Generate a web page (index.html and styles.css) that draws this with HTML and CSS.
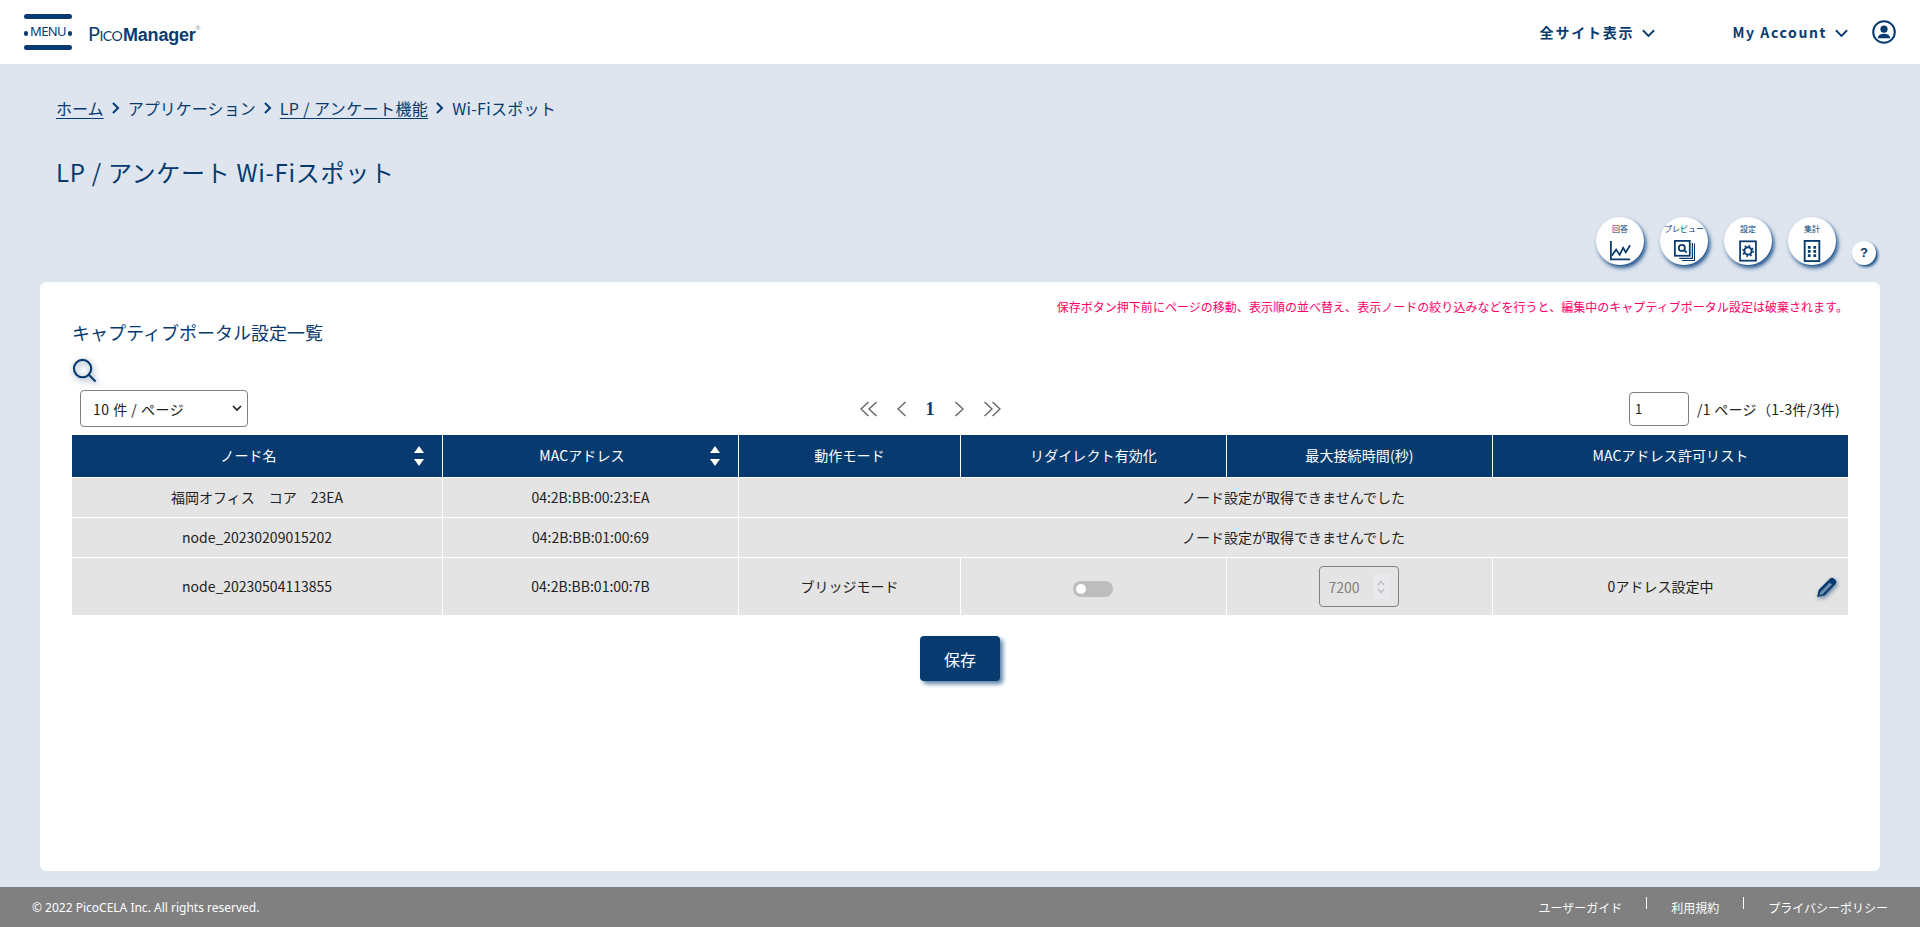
FILE: index.html
```html
<!DOCTYPE html>
<html lang="ja">
<head>
<meta charset="utf-8">
<title>LP / アンケート Wi-Fiスポット</title>
<link rel="stylesheet" href="styles.css">
</head>
<body>
<header class="topbar">
  <div class="brand">
    <div class="menu-btn">
      <span class="menu-bar"></span>
      <span class="menu-mid"><i class="menu-dot"></i><span class="menu-text">MENU</span><i class="menu-dot"></i></span>
      <span class="menu-bar"></span>
    </div>
    <div class="logo"><span class="logo-p">P</span><span class="logo-ico">ICO</span><span class="logo-m">Manager</span><sup class="logo-r">®</sup></div>
  </div>
  <nav class="topnav">
    <a class="nav-site">全サイト表示<svg class="chev" width="13" height="9" viewBox="0 0 14 9"><path d="M1 1l6 6 6-6" fill="none" stroke="#073b6f" stroke-width="2"/></svg></a>
    <a class="nav-account">My Account<svg class="chev" width="13" height="9" viewBox="0 0 14 9"><path d="M1 1l6 6 6-6" fill="none" stroke="#073b6f" stroke-width="2"/></svg></a>
    <svg class="user-ic" width="24" height="24" viewBox="0 0 24 24"><circle cx="12" cy="12" r="10.8" fill="none" stroke="#073b6f" stroke-width="2"/><circle cx="12" cy="9.2" r="3.6" fill="#073b6f"/><path d="M5.6 18.2c.6-3 3-4.4 6.4-4.4s5.800 1.400 6.400 4.400z" fill="#073b6f"/></svg>
  </nav>
</header>

<main class="page">
  <div class="crumbs">
    <a class="crumb-link">ホーム</a><svg class="crumb-sep" width="10" height="12" viewBox="0 0 10 12"><path d="M2 1l5 5-5 5" fill="none" stroke="#073b6f" stroke-width="2"/></svg><span>アプリケーション</span><svg class="crumb-sep" width="10" height="12" viewBox="0 0 10 12"><path d="M2 1l5 5-5 5" fill="none" stroke="#073b6f" stroke-width="2"/></svg><a class="crumb-link crumb-wide">LP / アンケート機能</a><svg class="crumb-sep" width="10" height="12" viewBox="0 0 10 12"><path d="M2 1l5 5-5 5" fill="none" stroke="#073b6f" stroke-width="2"/></svg><span class="crumb-last">Wi-Fiスポット</span>
  </div>
  <h1 class="page-title">LP / アンケート Wi-Fiスポット</h1>

  <div class="actions">
    <button class="round-btn"><span class="round-label">回答</span>
      <svg width="21" height="21" viewBox="0 0 24 24"><path d="M1 1v21h22" fill="none" stroke="#073b6f" stroke-width="2"/><path d="M2 18l5-7 4 6 4-8 3 5 5-8" fill="none" stroke="#073b6f" stroke-width="2"/></svg></button>
    <button class="round-btn"><span class="round-label">プレビュー</span>
      <svg width="21" height="21" viewBox="0 0 24 24"><rect x="1" y="1" width="17" height="17" fill="none" stroke="#073b6f" stroke-width="2"/><path d="M21 3.500v17.500H6M23.500 4v19.500H9" fill="none" stroke="#073b6f" stroke-width="1.400"/><circle cx="9" cy="9" r="3.500" fill="none" stroke="#073b6f" stroke-width="2"/><path d="M11.500 11.500l3 3" stroke="#073b6f" stroke-width="2"/></svg></button>
    <button class="round-btn"><span class="round-label">設定</span>
      <svg width="18" height="22" viewBox="0 0 20 25"><rect x="1" y="1.500" width="18" height="22" fill="none" stroke="#073b6f" stroke-width="2"/><circle cx="10" cy="12.500" r="4.200" fill="none" stroke="#073b6f" stroke-width="2.400"/><circle cx="10" cy="12.500" r="6" fill="none" stroke="#073b6f" stroke-width="1.600" stroke-dasharray="2 2.700"/></svg></button>
    <button class="round-btn"><span class="round-label">集計</span>
      <svg width="18" height="22" viewBox="0 0 18 24"><rect x="1" y="1" width="16" height="22" fill="none" stroke="#073b6f" stroke-width="2"/><path d="M4.500 6.500h3v3h-3zM10.500 6.500h3v3h-3zM4.500 11h3v3h-3zM10.500 11h3v3h-3zM4.500 15.500h3v3h-3zM10.500 15.500h3v3h-3z" fill="#073b6f"/></svg></button>
    <button class="help-btn">?</button>
  </div>

  <section class="card">
    <p class="warning">保存ボタン押下前にページの移動、表示順の並べ替え、表示ノードの絞り込みなどを行うと、編集中のキャプティブポータル設定は破棄されます。</p>
    <h2 class="card-title">キャプティブポータル設定一覧</h2>
    <svg class="search-ic" width="25" height="25" viewBox="0 0 26 26"><circle cx="11" cy="11" r="9" fill="none" stroke="#073b6f" stroke-width="2.200"/><path d="M17.500 17.500l7 7" stroke="#073b6f" stroke-width="2.200"/></svg>
    <div class="toolbar">
      <div class="select-box"><span>10 件 / ページ</span><svg width="10" height="7" viewBox="0 0 10 7"><path d="M1 1l4 4 4-4" fill="none" stroke="#222" stroke-width="1.700"/></svg></div>
      <div class="pager">
        <svg width="17" height="16" viewBox="0 0 17 16"><path d="M8.500 1L1 8l7.500 7M16.500 1L9 8l7.500 7" fill="none" stroke="#666" stroke-width="1.400"/></svg>
        <svg width="9" height="16" viewBox="0 0 9 16"><path d="M8.500 1L1 8l7.500 7" fill="none" stroke="#666" stroke-width="1.400"/></svg>
        <span class="pager-num">1</span>
        <svg width="9" height="16" viewBox="0 0 9 16"><path d="M.5 1L8 8l-7.500 7" fill="none" stroke="#666" stroke-width="1.400"/></svg>
        <svg width="17" height="16" viewBox="0 0 17 16"><path d="M.5 1L8 8l-7.500 7M8.500 1L16 8l-7.500 7" fill="none" stroke="#666" stroke-width="1.400"/></svg>
      </div>
      <div class="page-info"><span class="page-input">1</span><span>/1 ページ（1-3件/3件)</span></div>
    </div>

    <table class="grid">
      <colgroup>
        <col class="c1"><col class="c2"><col class="c3"><col class="c4"><col class="c5"><col class="c6">
      </colgroup>
      <thead>
        <tr>
          <th><div class="th-sort"><span>ノード名</span><span class="sorter"><i class="up"></i><i class="down"></i></span></div></th>
          <th><div class="th-sort"><span>MACアドレス</span><span class="sorter"><i class="up"></i><i class="down"></i></span></div></th>
          <th>動作モード</th>
          <th>リダイレクト有効化</th>
          <th>最大接続時間(秒)</th>
          <th>MACアドレス許可リスト</th>
        </tr>
      </thead>
      <tbody>
        <tr class="row-s"><td>福岡オフィス　コア　23EA</td><td>04:2B:BB:00:23:EA</td><td colspan="4">ノード設定が取得できませんでした</td></tr>
        <tr class="row-s"><td>node_20230209015202</td><td>04:2B:BB:01:00:69</td><td colspan="4">ノード設定が取得できませんでした</td></tr>
        <tr class="row-l">
          <td>node_20230504113855</td>
          <td>04:2B:BB:01:00:7B</td>
          <td>ブリッジモード</td>
          <td class="ctl"><span class="toggle"><i class="knob"></i></span></td>
          <td class="ctl"><span class="num-input"><span>7200</span><span class="spin"><svg width="8" height="16" viewBox="0 0 8 16"><path d="M1 6l3-3.500L7 6M1 10l3 3.500L7 10" fill="none" stroke="#b9b9c4" stroke-width="1.200"/></svg></span></span></td>
          <td class="allow"><span>0アドレス設定中</span><svg class="pencil" width="22" height="22" viewBox="0 0 20 20"><path d="M1 19l1.500-6.500L12.500 2.500q2-2 4 0l1 1q2 2 0 4L8 17.500z" fill="#073b6f"/><path d="M4 14.500l8.500-8.500 2 2-8.500 8.500-3 1z" fill="#6f8fb0"/></svg></td>
        </tr>
      </tbody>
    </table>
    <div class="save-wrap"><button class="save-btn">保存</button></div>
  </section>
</main>

<footer class="footer">
  <span class="copy">© 2022 PicoCELA Inc. All rights reserved.</span>
  <nav class="foot-links"><a>ユーザーガイド</a><i class="foot-sep"></i><a>利用規約</a><i class="foot-sep"></i><a>プライバシーポリシー</a></nav>
</footer>
</body>
</html>
```

FILE: styles.css
```css
* { box-sizing: border-box; }
html, body { margin: 0; height: 100%; }
body {
  display: flex;
  flex-direction: column;
  min-height: 927px;
  background: #dee5ef;
  color: #073b6f;
  font-family: "Noto Sans CJK JP", "Noto Sans", sans-serif;
  font-size: 14px;
  overflow: hidden;
}
.topbar {
  height: 64px;
  flex: none;
  background: #fff;
  display: flex;
  align-items: center;
  justify-content: space-between;
  padding: 0 24px;
}
.brand { display: flex; align-items: center; gap: 16px; }
.menu-btn { width: 48px; height: 36px; display: flex; flex-direction: column; justify-content: space-between; }
.menu-bar { display: block; height: 5px; border-radius: 3px; background: #073b6f; }
.menu-mid { display: flex; align-items: center; justify-content: space-between; }
.menu-dot { width: 4px; height: 5px; background: #073b6f; border-radius: 2px; margin-top: 2px; }
.menu-text { font-family: "Noto Sans", sans-serif; font-size: 13px; line-height: 14px; letter-spacing: -.6px; margin-top: -2px; }
.logo { display: flex; align-items: baseline; font-family: "Liberation Sans", sans-serif; margin-top: 4px; line-height: 20px; }
.logo-p { font-family: "Lato", sans-serif; font-size: 20px; letter-spacing: -.5px; }
.logo-ico { font-family: "Lato", sans-serif; font-size: 14px; letter-spacing: -.6px; }
.logo-m { font-size: 18px; font-weight: 700; letter-spacing: -.2px; margin-left: 1px; }
.logo-r { font-size: 6px; color: #6b7f95; align-self: flex-start; margin: 0; line-height: 10px; }
.topnav { display: flex; align-items: center; font-weight: 700; letter-spacing: 1.600px; font-size: 14px; }
.nav-site { display: flex; align-items: center; gap: 8px; letter-spacing: 1.800px; margin-right: 77px; }
.nav-account { display: flex; align-items: center; gap: 8px; margin-right: 24px; }
.chev { flex: none; margin-top: 2px; }
.user-ic { display: block; }

.page { flex: 1; display: flex; flex-direction: column; padding: 0 40px 16px; min-height: 0; }
.crumbs { display: flex; align-items: center; gap: 7px; padding: 30px 16px 0; height: 58px; font-size: 16px; line-height: 24px; letter-spacing: .05px; white-space: nowrap; }
.crumb-link { text-decoration: underline; text-underline-offset: 3px; }
.crumb-wide { letter-spacing: .4px; }
.crumb-last { letter-spacing: .3px; }
.crumb-sep { flex: none; }
.page-title { margin: 33px 0 0; padding: 0 16px; height: 34px; font-size: 24px; line-height: 34px; font-weight: 400; letter-spacing: .7px; }
.actions { height: 69px; margin-top: 24px; display: flex; align-items: flex-start; justify-content: flex-end; gap: 16px; flex: none; padding: 4px 4px 0 0; }
.round-btn {
  width: 48px; height: 48px; border-radius: 50%; border: 0; background: #fff; padding: 7px 0 0;
  box-shadow: 2px 3px 4px #1c5088; display: flex; flex-direction: column; align-items: center; font-family: inherit; color: #073b6f;
}
.round-label { font-size: 8px; line-height: 10px; height: 10px; margin-bottom: 6px; white-space: nowrap; }
.help-btn {
  width: 24px; height: 24px; border-radius: 50%; border: 0; background: #fff; padding: 0; margin-top: 24px;
  box-shadow: 2px 2px 3px #1c5088; color: #073b6f; font-family: "Liberation Sans", sans-serif; font-weight: 700; font-size: 13px; line-height: 24px;
}
.card { flex: 1; background: #fff; border-radius: 6px; padding: 16px 32px 0; min-height: 0; }
.warning { margin: 0; font-size: 12px; line-height: 18px; text-align: right; color: #ff0066; letter-spacing: .03px; }
.card-title { margin: 4px 0 0; height: 24px; font-size: 18px; line-height: 24px; font-weight: 400; }
.search-ic { display: block; margin-top: 14px; filter: drop-shadow(1px 2px 3px rgba(7,59,111,.6)); }
.toolbar { display: grid; grid-template-columns: 1fr auto 1fr; align-items: center; height: 37px; margin-top: 7px; padding: 0 8px; }
.select-box { width: 168px; height: 37px; border: 1px solid #808080; border-radius: 4px; display: flex; align-items: center; justify-content: space-between; padding: 0 5px 0 12px; color: #222; font-size: 14px; letter-spacing: .5px; }
.pager { display: flex; align-items: center; gap: 20px; margin-right: 60px; }
.pager-num { font-family: "Liberation Serif", serif; font-weight: 700; font-size: 18px; line-height: 18px; }
.page-info { display: flex; align-items: center; justify-content: flex-end; gap: 8px; color: #222; font-size: 14px; letter-spacing: .3px; }
.page-input { width: 60px; height: 34px; border: 1px solid #808080; border-radius: 4px; padding: 0 5px; display: flex; align-items: center; font-size: 13px; }
.grid { width: 1776px; margin-top: 8px; border-collapse: separate; border-spacing: 0; table-layout: fixed; font-size: 14px; color: #222; }
.c1 { width: 370px; } .c2 { width: 296px; } .c3 { width: 222px; } .c4 { width: 266px; } .c5 { width: 266px; } .c6 { width: 356px; }
.grid th { height: 43px; background: #073b6f; color: #fff; font-weight: 400; font-size: 14px; padding: 0 0 2px; border-left: 1px solid #fff; border-bottom: 1px solid #fff; letter-spacing: .1px; }
.grid th:first-child, .grid td:first-child { border-left: 0; }
.th-sort { position: relative; display: flex; justify-content: center; align-items: center; height: 40px; padding-right: 17px; }
.sorter { position: absolute; right: 18px; top: 11px; display: flex; flex-direction: column; gap: 6px; }
.up { display: block; width: 0; height: 0; border: 5px solid transparent; border-top: 0; border-bottom: 7px solid #fff; }
.down { display: block; width: 0; height: 0; border: 5px solid transparent; border-bottom: 0; border-top: 7px solid #fff; }
.grid td { background: #e4e4e4; text-align: center; padding: 0 0 2px; border-left: 1px solid #fff; border-bottom: 1px solid #fff; }
.grid td.ctl { padding-bottom: 0; }
.row-s td { height: 40px; }
.row-l td { height: 57px; border-bottom: 0; }
.toggle { display: inline-block; vertical-align: middle; width: 40px; height: 16px; border-radius: 8px; background: #bdbdbd; padding: 3px; margin-right: 2px; }
.knob { display: block; width: 10px; height: 10px; border-radius: 50%; background: #fff; }
.num-input { display: inline-flex; vertical-align: middle; align-items: center; justify-content: space-between; width: 80px; height: 41px; border: 1px solid #808080; border-radius: 4px; padding: 0 9px; color: #808080; margin-right: 2px; }
.spin { display: flex; background: #e9e9ed; width: 17px; height: 25px; align-items: center; justify-content: center; margin-right: -1px; }
.grid td.allow { position: relative; padding-right: 20px; }
.pencil { position: absolute; right: 10px; top: 18px; filter: drop-shadow(1px 2px 2px rgba(7,59,111,.6)); }
.save-wrap { display: flex; justify-content: center; margin-top: 21px; }
.save-btn { width: 80px; height: 45px; border: 0; border-radius: 4px; background: #073b6f; color: #fff; font-family: inherit; font-size: 16px; box-shadow: 3px 3px 4px #5f83a8; }
.footer { height: 40px; flex: none; background: #808080; color: #fff; display: flex; align-items: center; justify-content: space-between; font-size: 12px; padding: 0 32px; }
.copy { font-family: "Noto Sans", sans-serif; }
.foot-links { display: flex; align-items: center; gap: 24px; }
.foot-sep { display: block; width: 1px; height: 12px; background: #fff; margin-top: -8px; }
```
